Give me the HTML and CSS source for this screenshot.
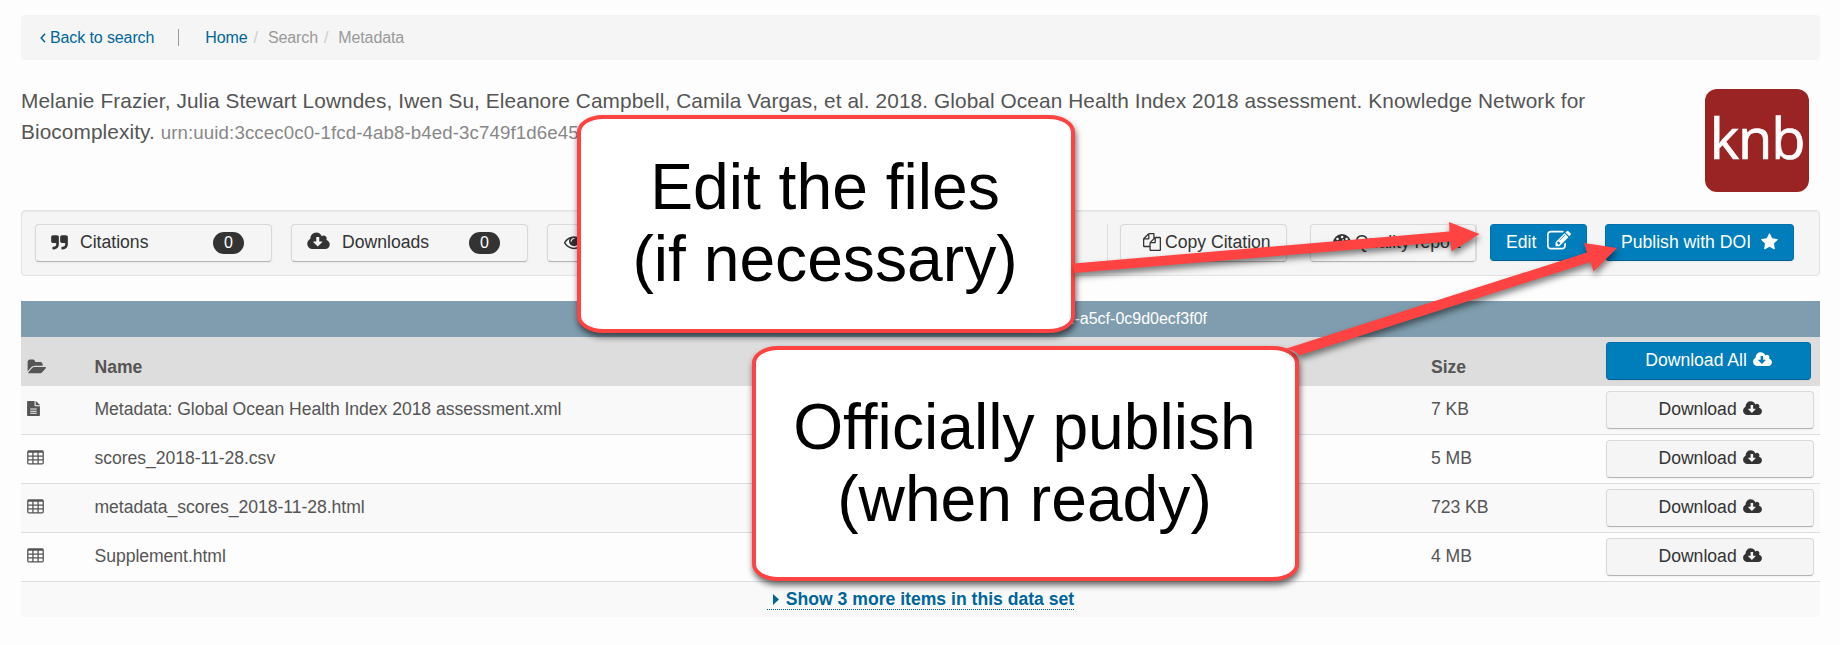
FILE: index.html
```html
<!DOCTYPE html>
<html lang="en">
<head>
<meta charset="utf-8">
<title>Global Ocean Health Index 2018 assessment</title>
<link rel="stylesheet" href="styles.css">
</head>
<body>
<svg class="defs" width="0" height="0">
  <symbol id="cloud" viewBox="0 0 1920 1792"><path d="M1280 928q0-14-9-23t-23-9h-224v-352q0-13-9.5-22.5t-22.5-9.5h-192q-13 0-22.5 9.5t-9.5 22.5v352h-224q-13 0-22.5 9.5t-9.5 22.5q0 14 9 23l352 352q9 9 23 9t23-9l351-351q10-12 10-24zm640 224q0 159-112.5 271.5t-271.5 112.5h-1088q-185 0-316.5-131.5t-131.5-316.5q0-130 70-240t188-165q-2-30-2-43 0-212 150-362t362-150q156 0 285.5 87t188.5 231q71-62 166-62 106 0 181 75t75 181q0 76-41 138 130 31 213.5 135.5t83.5 238.5z"/></symbol>
  <symbol id="table" viewBox="0 0 1664 1792"><path fill-rule="evenodd" d="M160 128h1344q160 0 160 160v1088q0 160-160 160h-1344q-160 0-160-160v-1088q0-160 160-160zM128 384v256h384v-256zM640 384v256h384v-256zM1152 384v256h384v-256zM128 768v256h384v-256zM640 768v256h384v-256zM1152 768v256h384v-256zM128 1152v256h384v-256zM640 1152v256h384v-256zM1152 1152v256h384v-256z"/></symbol>
</svg>
<main class="page">
  <nav class="breadcrumb">
    <a class="back"><svg class="chev" viewBox="0 0 6 10"><path d="M5 .8 1.2 5 5 9.2" fill="none" stroke="currentColor" stroke-width="1.5"/></svg>Back to search</a>
    <span class="rule"></span>
    <a>Home</a><span class="slash">/</span><span class="crumb">Search</span><span class="slash">/</span><span class="crumb">Metadata</span>
  </nav>

  <header class="citation">
    <p class="cite">Melanie Frazier, Julia Stewart Lowndes, Iwen Su, Eleanore Campbell, Camila Vargas, et al. 2018. Global Ocean Health Index 2018 assessment. Knowledge Network for<br>Biocomplexity. <span class="urn">urn:uuid:3ccec0c0-1fcd-4ab8-b4ed-3c749f1d6e45</span></p>
    <div class="logo">knb</div>
  </header>

  <section class="toolbar">
    <div class="btn metric"><svg class="ic quote" viewBox="64 0 1664 1792"><path d="M832 320v704q0 104-40.5 198.5t-109.5 163.5-163.5 109.5-198.5 40.5h-64q-26 0-45-19t-19-45v-128q0-26 19-45t45-19h64q106 0 181-75t75-181v-32q0-40-28-68t-68-28h-224q-80 0-136-56t-56-136v-384q0-80 56-136t136-56h384q80 0 136 56t56 136zm896 0v704q0 104-40.5 198.5t-109.5 163.5-163.5 109.5-198.5 40.5h-64q-26 0-45-19t-19-45v-128q0-26 19-45t45-19h64q106 0 181-75t75-181v-32q0-40-28-68t-68-28h-224q-80 0-136-56t-56-136v-384q0-80 56-136t136-56h384q80 0 136 56t56 136z"/></svg><span>Citations</span><b class="badge">0</b></div>
    <div class="btn metric"><svg class="ic bigcloud"><use href="#cloud"/></svg><span>Downloads</span><b class="badge">0</b></div>
    <div class="btn metric"><svg class="ic eye" viewBox="0 0 1792 1792"><path d="M1664 960q-152-236-381-353 61 104 61 225 0 185-131.5 316.5t-316.5 131.5-316.5-131.5-131.5-316.5q0-121 61-225-229 117-381 353 133 205 333.5 326.5t434.5 121.5 434.5-121.5 333.5-326.5zm-720-384q0-20-14-34t-34-14q-125 0-214.5 89.5t-89.5 214.5q0 20 14 34t34 14 34-14 14-34q0-86 61-147t147-61q20 0 34-14t14-34zm848 384q0 34-20 69-140 230-376.5 368.5t-499.5 138.5-499.5-139-376.5-368q-20-35-20-69t20-69q140-229 376.5-368t499.5-139 499.5 139 376.5 368q20 35 20 69z"/></svg></div>
    <div class="actions">
      <div class="btn copy"><svg class="ic sq" viewBox="0 0 1792 1792"><path d="M1696 384q40 0 68 28t28 68v1216q0 40-28 68t-68 28h-960q-40 0-68-28t-28-68v-288h-544q-40 0-68-28t-28-68v-672q0-40 20-88t48-76l408-408q28-28 76-48t88-20h416q40 0 68 28t28 68v328q68-40 128-40h416zm-544 213l-299 299h299v-299zm-640-384l-299 299h299v-299zm196 647l316-316v-416h-384v416q0 40-28 68t-68 28h-416v640h512v-256q0-40 20-88t48-76zm956 804v-1152h-384v416q0 40-28 68t-68 28h-416v640h896z"/></svg>Copy Citation</div>
      <div class="btn quality"><svg class="ic sq" viewBox="0 0 18 18"><path fill-rule="evenodd" d="M0 10a9 9 0 0 1 18 0q0 3-1.500 5.300h-15Q0 13 0 10zM7.800 4a1.300 1.300 0 1 0 2.600 0 1.300 1.300 0 1 0-2.600 0zM3.200 6a1.300 1.300 0 1 0 2.600 0 1.300 1.300 0 1 0-2.600 0zM12.300 6a1.300 1.300 0 1 0 2.600 0 1.300 1.300 0 1 0-2.600 0zM8.500 11l1.300-5 1 .3-1.200 5z"/></svg>Quality report</div>
    </div>
    <div class="btn blue edit">Edit<svg class="ic pencil" viewBox="0 0 1792 1792"><path d="M888 1184l116-116-152-152-116 116v56h96v96h56zm440-720q-16-16-33 1l-350 350q-17 17-1 33t33-1l350-350q17-17 1-33zm80 594v190q0 119-84.5 203.500t-203.500 84.500h-832q-119 0-203.500-84.500t-84.500-203.500v-832q0-119 84.500-203.500t203.500-84.500h832q63 0 117 25 15 7 18 23 3 17-9 29l-49 49q-14 14-32 8-23-6-45-6h-832q-66 0-113 47t-47 113v832q0 66 47 113t113 47h832q66 0 113-47t47-113v-126q0-13 9-22l64-64q15-15 35-7t20 29zm-96-738l288 288-672 672h-288v-288zm444 132l-92 92-288-288 92-92q28-28 68-28t68 28l152 152q28 28 28 68t-28 68z"/></svg></div>
    <div class="btn blue publish">Publish with DOI<svg class="ic star" viewBox="64 0 1664 1792"><path d="M1728 647q0 22-26 48l-363 354 86 500q1 7 1 20 0 21-10.500 35.500t-30.500 14.500q-19 0-40-12l-449-236-449 236q-22 12-40 12-21 0-31.500-14.500t-10.500-35.500q0-6 2-20l86-500-364-354q-25-27-25-48 0-37 56-46l502-73 225-455q19-41 49-41t49 41l225 455 502 73q56 9 56 46z"/></svg></div>
  </section>

  <section class="files">
    <div class="caption">2-a5cf-0c9d0ecf3f0f</div>
    <div class="row head">
      <svg class="ic folder" viewBox="0 0 1943 1792"><path d="M1943 952q0 31-31 66l-336 396q-43 51-120.500 86.500t-143.500 35.500h-1088q-34 0-60.500-13t-26.500-43q0-31 31-66l336-396q43-51 120.500-86.500t143.500-35.500h1088q34 0 60.500 13t26.500 43zm-343-344v160h-832q-94 0-197 47.500t-164 119.500l-337 396-5 6q0-4-.5-12.500t-.5-12.500v-960q0-92 66-158t158-66h320q92 0 158 66t66 158v32h544q92 0 158 66t66 158z"/></svg>
      <span class="name">Name</span><span class="size">Size</span>
      <div class="btn blue all">Download All <svg class="ic cl"><use href="#cloud"/></svg></div>
    </div>
    <div class="row odd">
      <svg class="ic file" viewBox="0 0 1536 1792"><path fill-rule="evenodd" d="M0 96Q0 0 96 0h800v544q0 96 96 96h544v1056q0 96-96 96h-1344q-96 0-96-96zM1024 0q60 20 90 50l372 372q30 30 50 90h-512zM384 896v128h768v-128zM384 1152v128h768v-128zM384 1408v128h768v-128z"/></svg>
      <span class="name">Metadata: Global Ocean Health Index 2018 assessment.xml</span><span class="size">7 KB</span>
      <div class="btn dl">Download <svg class="ic cl"><use href="#cloud"/></svg></div>
    </div>
    <div class="row">
      <svg class="ic tbl"><use href="#table"/></svg>
      <span class="name">scores_2018-11-28.csv</span><span class="size">5 MB</span>
      <div class="btn dl">Download <svg class="ic cl"><use href="#cloud"/></svg></div>
    </div>
    <div class="row odd">
      <svg class="ic tbl"><use href="#table"/></svg>
      <span class="name">metadata_scores_2018-11-28.html</span><span class="size">723 KB</span>
      <div class="btn dl">Download <svg class="ic cl"><use href="#cloud"/></svg></div>
    </div>
    <div class="row">
      <svg class="ic tbl"><use href="#table"/></svg>
      <span class="name">Supplement.html</span><span class="size">4 MB</span>
      <div class="btn dl">Download <svg class="ic cl"><use href="#cloud"/></svg></div>
    </div>
    <div class="more"><a><svg class="caret" viewBox="0 0 6 11"><path d="M0 0 6 5.500 0 11z"/></svg>Show 3 more items in this data set</a></div>
  </section>
</main>

<div class="callout edit-note">Edit the files<br>(if necessary)</div>
<div class="callout publish-note">Officially publish<br>(when ready)</div>
<svg class="arrows" viewBox="0 0 1840 645">
  <path d="M1074 263.500 1449.500 231.500 1449 222 1479.500 234 1451.500 251.500 1450.500 241.500 1074 273z"/>
  <path d="M1285 349 1587 252.500 1584 243 1617 248 1593.500 271.500 1590.500 262 1299 355.500Q1296 350 1285 349z"/>
</svg>
</body>
</html>
```
FILE: styles.css
```css
* { box-sizing: border-box; }
body {
  margin: 0;
  height: 645px;
  position: relative;
  overflow: hidden;
  background: #fdfdfd;
  color: #555;
  font: 17.6px/22px "Liberation Sans", Arial, sans-serif;
}
.defs { position: absolute; }
.page { padding: 15px 20px 0 21px; }
.ic { fill: currentColor; flex: none; display: inline-block; }

.breadcrumb {
  display: flex;
  align-items: center;
  height: 45px;
  padding: 0 19px;
  border-radius: 4px;
  background: #f5f5f5;
  font-size: 16px;
  letter-spacing: -.11px;
  color: #999;
}
.breadcrumb a { color: #006699; }
.chev { width: 6px; height: 10px; margin-right: 4px; }
.rule { width: 1px; height: 17px; margin: 0 26px 0 24px; background: #999; }
.slash { color: #ccc; padding: 0 10px 0 6px; }

.citation {
  display: flex;
  justify-content: space-between;
  height: 150px;
  padding: 25px 11px 0 0;
}
.cite { margin: 0; font-size: 20.8px; letter-spacing: .098px; line-height: 31px; white-space: nowrap; }
.urn { color: #888; font-size: 18.7px; }
.logo {
  width: 104px;
  height: 103px;
  margin-top: 4px;
  border-radius: 12px;
  background: #9a2424;
  color: #fff;
  font: 56px/96px "Open Sans", sans-serif;
  letter-spacing: -1.2px;
  -webkit-text-stroke: .7px #fff;
  text-align: center;
}

.toolbar {
  display: flex;
  height: 66px;
  padding: 13px;
  border: 1px solid #e3e3e3;
  border-radius: 4px;
  background: #f5f5f5;
  box-shadow: inset 0 1px 1px rgba(0,0,0,.05);
}
.btn {
  height: 38px;
  border: 1px solid #d9d9d9;
  border-bottom-color: #b3b3b3;
  border-radius: 4px;
  background: #f5f5f5;
  color: #333;
  line-height: 34px;
  white-space: nowrap;
  box-shadow: 0 1px 2px rgba(0,0,0,.05);
}
.btn .ic { vertical-align: -.143em; }
.blue {
  background: #007dbb;
  border-color: #0071aa;
  border-bottom-color: #005f8f;
  color: #fff;
}
.metric { display: flex; align-items: center; width: 237px; padding-left: 15px; margin-right: 19px; }
.metric span { line-height: 34px; margin-bottom: 2px; }
.quote { width: 17px; height: 18px; margin-right: 12px; }
.bigcloud { width: 23px; height: 21px; margin-right: 12px; margin-top: -3px; }
.eye { width: 20px; height: 20px; margin-left: 1px; margin-top: -3px; }
.badge {
  width: 31px;
  height: 22px;
  margin: 0 27px 0 auto;
  border-radius: 11px;
  background: #333;
  color: #fff;
  font: 16px/22px "Liberation Sans", Arial, sans-serif;
  text-align: center;
}
.actions {
  display: flex;
  height: 37px;
  margin-left: auto;
  padding-left: 12px;
  border-left: 1px solid #ddd;
  border-right: 1px solid #ddd;
}
.copy { width: 167px; padding-left: 22px; margin-right: 23px; }
.quality { width: 166px; padding-left: 22px; }
.sq { width: 18px; height: 18px; margin-right: 4px; }
.edit { width: 97px; height: 37px; padding-left: 15px; margin: 0 18px 0 13px; }
.pencil { width: 24px; height: 24px; margin-left: 11px; }
.edit .pencil { vertical-align: -5px; }
.publish { width: 189px; height: 37px; padding-left: 15px; margin-right: 12px; }
.star { width: 17px; height: 18px; margin-left: 10px; }

.files { margin-top: 25px; }
.caption {
  height: 36px;
  padding-right: 613px;
  background: #7f9dae;
  color: #fff;
  font-size: 16px;
  line-height: 36px;
  text-align: right;
}
.row {
  display: grid;
  grid-template-columns: 67.5px 1336.5px 175px 208px;
  height: 49px;
  padding: 5px 0 0 6px;
  border-bottom: 1px solid #ddd;
}
.row > span { line-height: 34px; padding-top: 1px; letter-spacing: -.045px; }
.row > .ic { margin-top: 9px; }
.odd { background: #f9f9f9; }
.head { background: #ddd; font-weight: bold; }
.head > span { padding-top: 8px; }
.head > .ic { margin-top: 16px; }
.name, .size { white-space: nowrap; }
.folder { width: 19px; height: 18px; }
.row > .file { width: 13px; height: 15px; margin-top: 10px; }
.tbl { width: 17px; height: 18px; }
.cl { width: 19px; height: 17.6px; margin-left: 1px; }
.all { width: 205px; font-weight: normal; text-align: center; }
.dl { text-align: center; }
.more { height: 35px; background: #f9f9f9; text-align: center; padding-top: 6px; }
.more a {
  display: inline-block;
  height: 22px;
  padding-left: 6px;
  border-bottom: 1px dotted #006699;
  color: #006699;
  font-weight: bold;
}
.caret { width: 6px; height: 11px; margin-right: 7px; fill: currentColor; }

/* Annotations drawn over the page */
.callout {
  position: absolute;
  border: 4px solid #ff4343;
  border-radius: 26px / 17px;
  background: #fff;
  color: #000;
  font-size: 64.2px;
  line-height: 72px;
  text-align: center;
  white-space: nowrap;
  box-shadow: 1px 4px 6px rgba(0,0,0,.6);
}
.edit-note { left: 577px; top: 115px; width: 498px; height: 218px; padding: 32px 2px 0 0; }
.publish-note { left: 752px; top: 346px; width: 547px; height: 235px; padding: 41px 2px 0 0; }
.arrows {
  position: absolute;
  left: 0;
  top: 0;
  width: 1840px;
  height: 645px;
  fill: #ff4343;
  filter: drop-shadow(1px 4px 3px rgba(0,0,0,.5));
}
```
